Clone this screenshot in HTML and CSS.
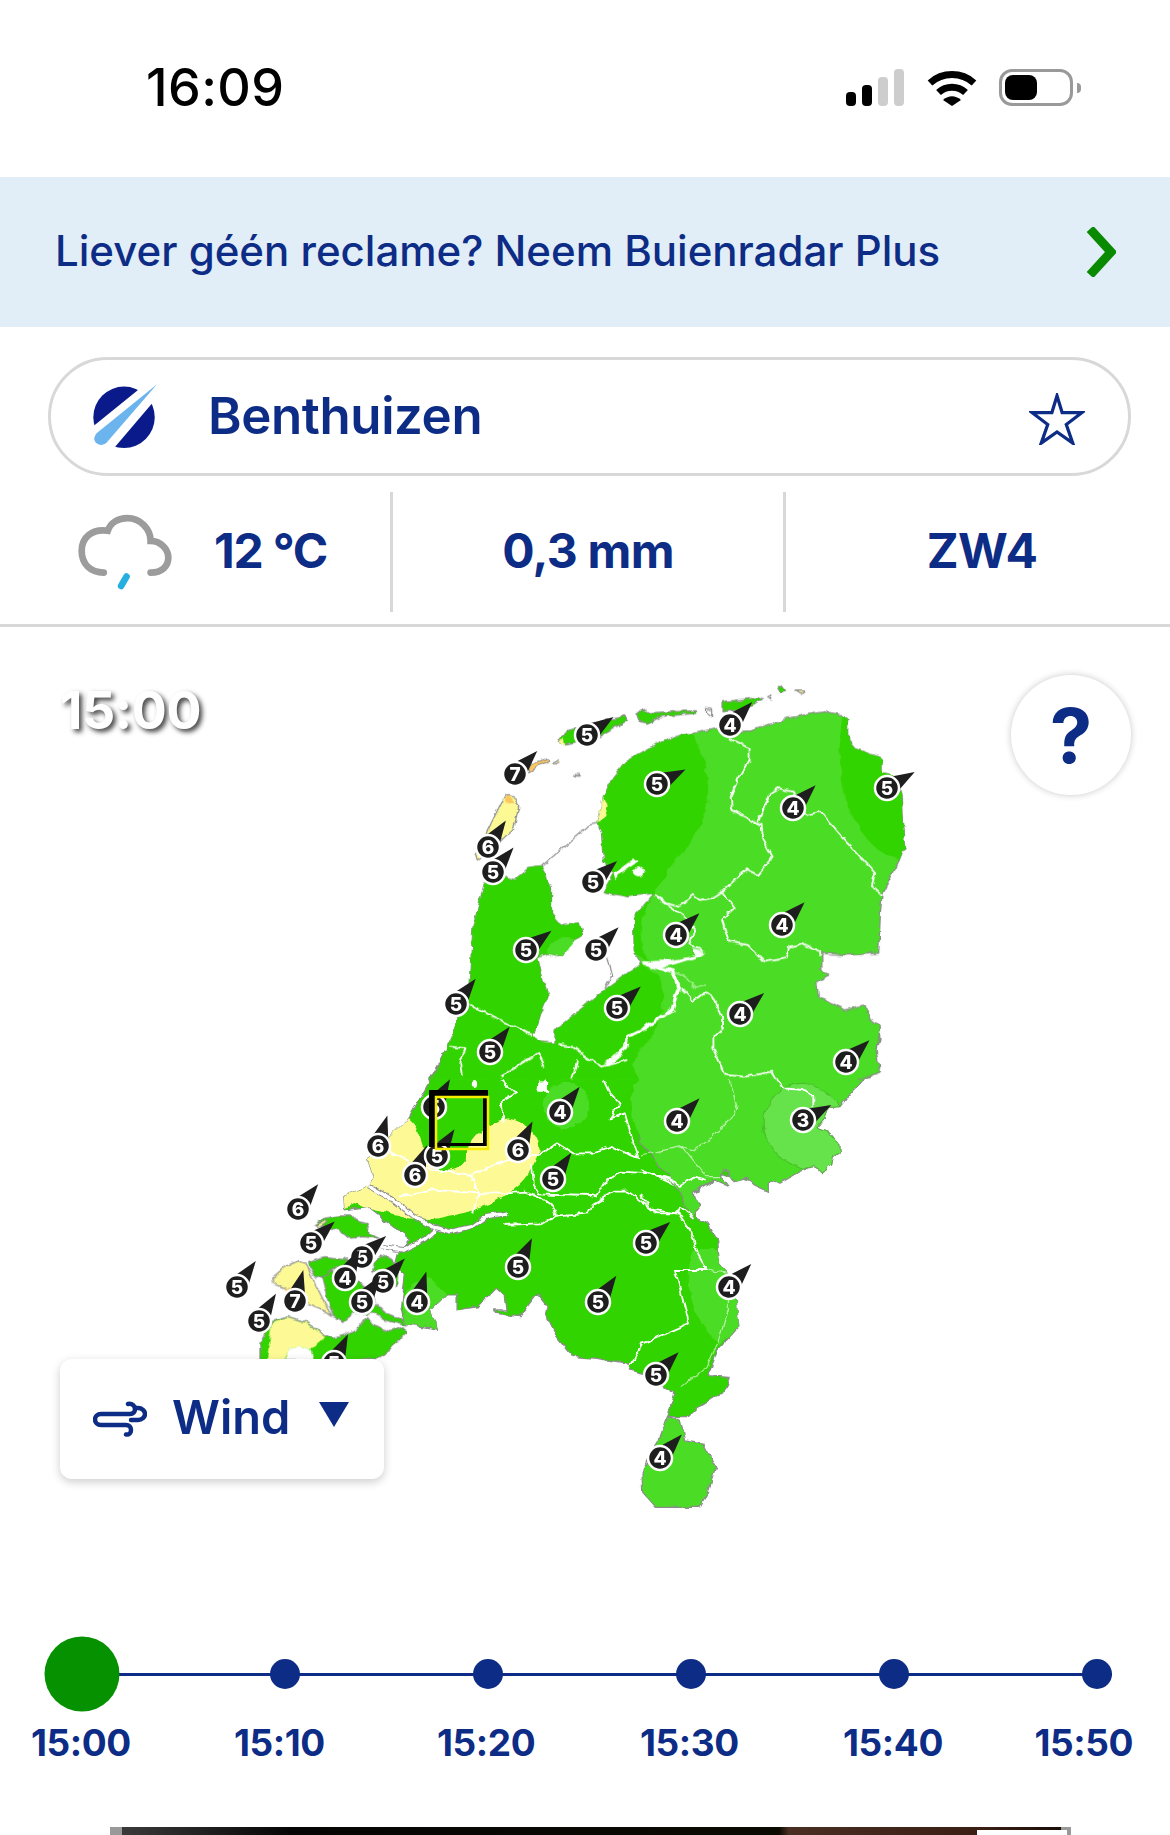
FILE: index.html
```html
<!DOCTYPE html>
<html lang="nl">
  <head>
    <meta charset="utf-8">
    <title>Buienradar</title>
    <link rel="stylesheet" href="styles.css">
  </head>
  <body>
    <div class="status-bar">
      <div class="clock">16:09</div>
      <div class="status-icons">
        <div class="signal">
          <span class="bar bar-1"></span>
          <span class="bar bar-2"></span>
          <span class="bar bar-3"></span>
          <span class="bar bar-4"></span>
        </div>
        <svg class="wifi" viewBox="0 0 50 37">
          <path class="wifi-arc" d="M3 14 A33 33 0 0 1 47 14"/>
          <path class="wifi-arc" d="M11.5 23.5 A20 20 0 0 1 38.500 23.500"/>
          <path class="wifi-dot" d="M16 31 Q25 23.500 34 31 L25 37 Z"/>
        </svg>
        <div class="battery"><span class="battery-level"></span></div>
        <span class="battery-tip"></span>
      </div>
    </div>

    <div class="promo">
      <span class="promo-text">Liever géén reclame? Neem Buienradar Plus</span>
      <svg class="promo-arrow" viewBox="0 0 30 50"><path d="M4 2 L25 25 L4 48"/></svg>
    </div>

    <div class="search">
      <svg class="logo" viewBox="95 40 205 205">
        <circle class="logo-disc" cx="193" cy="145" r="94"/>
        <path class="logo-gap" d="M250 50 L92 178 L95 245 L160 242 L285 95 Z"/>
        <path class="logo-tail" d="M294 44 L138 224 Q120 236 106 222 Q96 208 110 193 Z"/>
      </svg>
      <span class="place">Benthuizen</span>
      <svg class="star" viewBox="0 0 60 56">
        <path d="M30 3 L35.500 21 L57 21 L40 34 L47 54 L30 42 L13 54 L20 34 L3 21 L24.500 21 Z"/>
      </svg>
    </div>

    <div class="stats">
      <div class="stat stat-temp">
        <svg class="cloud" viewBox="50 435 290 230">
          <path class="cloud-line" d="M130 610 C90 610 64 585 64 545 C64 505 95 478 142 485 C150 460 175 447 200 447 C240 447 270 480 270 515 C300 515 323 540 323 565 C323 590 305 610 270 610"/>
          <path class="cloud-drop" d="M198 622 L182 650"/>
        </svg>
        <span>12 °C</span>
      </div>
      <div class="stat">0,3 mm</div>
      <div class="stat stat-wind">ZW4</div>
    </div>

    <div class="map">
      <svg class="map-svg" viewBox="0 627 1170 1000">
        <defs>
          <path id="arrow" d="M0 -32 L9 -6 L-9 -6 Z"/>
          <filter id="rough" filterUnits="userSpaceOnUse" x="150" y="650" width="800" height="900" color-interpolation-filters="sRGB">
            <feTurbulence type="fractalNoise" baseFrequency=".11" numOctaves="2" seed="3"/>
            <feDisplacementMap in="SourceGraphic" scale="6" xChannelSelector="R" yChannelSelector="G"/>
          </filter>
        </defs>

        <g filter="url(#rough)">
        <!-- zuid -->
        <g transform="translate(200 1050) scale(.357 .3333)">
          <path class="land dark" d="M690 0 L640 100 585 205 470 325 485 380 475 408 400 438 402 480 470 470 480 480 540 530 590 570 555 610 545 650 575 670 565 770 575 820 665 838 645 780 690 735 720 735 720 780 780 770 830 715 855 740 860 780 825 780 830 790 895 800 945 730 975 770 970 795 1000 860 1045 920 1110 925 1200 940 1205 960 1240 970 1330 1030 1310 1100 1365 1100 1390 1075 1470 1020 1485 985 1420 980 1440 930 1450 900 1510 830 1505 790 1500 700 1455 640 1450 570 1420 520 1390 505 1385 430 1430 400 1455 370 1500 380 1568 405 1568 0"/>
          <path class="land light" d="M1310 1100 L1290 1160 1260 1210 1238 1270 1240 1330 1275 1372 1400 1372 1420 1330 1445 1250 1410 1180 1360 1170 1345 1110 Z"/>
          <path class="zone light" d="M1380 600 C1355 690 1370 800 1455 885 L1510 830 1505 790 1500 700 1455 640 1450 600 Z"/>
          <path class="zone light" d="M570 750 C580 705 620 680 650 690 L692 733 645 780 665 836 575 820 Z"/>
          <ellipse class="zone light" cx="1025" cy="165" rx="65" ry="70"/>
          <path class="zone yellow" d="M585 205 C620 235 625 300 650 345 C680 370 720 370 745 330 C740 280 790 225 860 205 C920 215 960 270 950 310 C930 370 900 430 770 480 C720 495 660 505 640 510 L580 505 480 478 440 458 402 478 400 438 475 408 485 380 470 325 Z"/>
          <path class="blank" d="M950 70 L975 100 975 125 945 125 Z"/>
          <circle class="blank" cx="770" cy="102" r="9"/>
          <polyline class="water-edge" points="475 410 540 450 600 500 650 530 700 545 760 530 800 500 860 490"/>
          <polyline class="water-edge" points="510 590 570 600 630 570 660 540"/>
          <polyline class="water" points="475 410 540 450 600 500 650 530 700 545 760 530 800 500 860 490"/>
          <polyline class="water" points="510 590 570 600 630 570 660 540"/>
          <polyline class="border" points="530 305 600 345 660 360 760 375 860 330 905 330"/>
          <polyline class="border" points="760 375 780 430 765 490"/>
          <polyline class="border" points="560 440 660 420 780 430 860 430 910 425 950 440 990 470 1000 500 950 520 850 525"/>
          <polyline class="border" points="945 430 1090 435 1110 440 1135 395 1180 365 1260 370 1340 410 1400 385"/>
          <polyline class="border" points="1000 500 1090 490 1100 465 1160 425 1200 425 1280 490 1340 490 1375 545 1395 610 1420 660 1330 660 1370 820 1240 880 1200 960"/>
          <polyline class="border" points="930 345 935 405 950 430"/>
          <polyline class="border" points="905 330 955 310 1000 280 1045 310 1090 310 1150 290 1230 325"/>
          <polyline class="border" points="1120 60 1150 130 1175 160 1150 205 1190 190 1225 320"/>
          <polyline class="border" points="1250 0 1190 20 1120 55 1060 25 1040 85"/>
          <polyline class="border" points="730 0 725 75 790 85 830 70 900 25 950 15 1000 50 1060 25"/>
          <polyline class="border" points="840 85 885 130 845 155 850 215"/>
          <polyline class="border faint" points="1420 660 1480 670 1480 780 1450 880 1420 950 1350 1010"/>
        </g>

        <!-- oost -->
        <g transform="translate(640 1030) scale(.3333)">
          <path class="land light" d="M0 0 L718 0 720 30 700 90 718 125 680 140 640 180 620 205 600 230 565 232 555 265 530 295 570 310 600 345 600 365 580 380 575 405 548 425 520 410 480 425 420 460 405 452 385 460 385 485 340 465 320 445 285 455 265 425 250 420 240 435 265 470 220 450 160 490 180 530 165 550 155 570 C130 480 60 400 0 340 Z"/>
          <path class="zone lighter" d="M490 418 C410 390 365 330 370 270 C375 210 430 160 490 160 C530 165 580 195 600 230 L565 232 555 265 530 295 570 310 600 345 600 365 580 380 575 405 548 425 520 410 Z"/>
          <polyline class="border" points="225 5 220 40 250 110 265 130 355 128 385 120 430 175 490 180 520 200 520 225"/>
          <polyline class="border" points="0 420 40 435 90 450 120 465 165 440 200 450"/>
          <polyline class="border" points="0 495 40 540 110 550 120 530 145 550 160 570"/>
          <polyline class="border faint" points="265 135 270 160 290 240 240 300 210 325 160 360 125 350 50 365 0 375"/>
          <polyline class="border faint" points="125 350 165 400 200 440 240 440"/>
        </g>
        <path class="zone light" transform="translate(200 1050) scale(.357 .3333)" d="M1250 0 L1210 40 1230 90 1205 140 1210 210 1240 270 1275 320 1290 0 Z"/>

        <!-- zeeland -->
        <g transform="translate(210 1210) scale(.3333)">
          <path class="land dark" d="M312 45 L340 25 385 18 420 18 470 40 480 70 505 85 460 80 420 85 385 60 365 55 Z"/>
          <path class="land yellow" d="M320 45 L345 30 350 38 325 55 Z"/>
          <path class="land dark" d="M490 160 L510 135 550 150 565 175 560 230 520 195 485 185 Z"/>
          <path class="land dark" d="M295 155 L340 140 400 145 420 160 375 175 355 190 320 205 305 180 Z"/>
          <path class="land dark" d="M335 200 L365 185 440 210 480 240 500 280 530 310 580 330 590 345 520 325 490 310 430 310 400 335 370 320 350 260 Z"/>
          <path class="land yellow" d="M185 205 L225 170 265 152 290 165 320 230 350 290 365 320 330 295 290 280 260 255 225 235 190 220 Z"/>
          <path class="zone orange" d="M220 240 L240 228 248 236 230 245 Z"/>
          <path class="land dark" d="M150 400 L185 335 235 320 285 335 345 375 370 385 405 375 450 350 470 320 490 345 540 365 580 350 585 370 540 420 500 450 150 450 Z"/>
          <path class="zone yellow" d="M172 440 L185 340 235 322 285 338 345 378 300 420 265 408 232 420 230 450 172 450 Z"/>
          <path class="blank" d="M232 420 L265 408 300 420 312 450 232 450 Z"/>
        </g>

        <!-- noord -->
        <g transform="translate(400 660) scale(.3444 .3333)">
          <path class="land light" d="M95 1260 L150 1130 200 980 212 800 245 670 300 650 335 660 375 625 410 620 440 680 440 760 470 795 520 785 530 825 500 845 470 890 430 880 400 890 415 960 430 1010 410 1060 395 1110 380 1120 400 1145 450 1150 450 1110 600 985 700 910 680 880 678 770 735 700 660 710 590 695 620 640 590 600 585 520 575 490 590 410 610 365 660 300 720 265 815 222 850 220 920 205 960 215 1020 212 1040 205 1120 175 1230 155 1285 165 1300 180 1300 240 1320 265 1400 295 1400 340 1440 350 1455 400 1460 500 1465 560 1450 600 1400 700 1395 760 1390 880 1300 885 1225 880 1225 930 1245 945 1210 965 1215 1010 1290 1050 1350 1035 1365 1075 1395 1100 1385 1170 1395 1235 1340 1255 1330 1260"/>
          <path class="zone dark" d="M575 490 L590 410 610 365 660 300 720 265 815 222 850 220 C905 330 930 470 800 600 C770 640 750 690 735 700 L660 710 590 695 620 640 590 600 585 520 Z"/>
          <path class="zone dark" d="M1285 165 L1300 180 1300 240 1320 265 1400 295 1400 340 1440 350 1455 400 1460 500 1465 560 1450 600 C1330 560 1250 400 1285 165 Z"/>
          <path class="zone dark" d="M95 1260 L150 1130 200 980 212 800 245 670 300 650 335 660 375 625 410 620 440 680 440 760 470 795 520 785 530 825 500 845 470 890 430 880 400 890 415 960 430 1010 410 1060 395 1110 380 1120 400 1145 450 1150 450 1110 600 985 700 910 750 950 C790 1050 740 1120 690 1180 C670 1210 680 1240 695 1260 Z"/>
          <path class="zone dark" d="M735 700 L678 770 680 880 720 905 C690 840 690 790 735 700 Z"/>
          <path class="zone light" d="M425 875 C440 835 490 815 503 850 L470 890 430 880 Z"/>
          <path class="zone yellow" d="M590 410 L600 440 590 480 575 490 585 430 Z"/>
          <path class="blank" d="M620 640 L680 595 690 605 640 640 625 660 Z"/>
          <ellipse class="blank" cx="693" cy="637" rx="17" ry="15"/>
          <path class="blank" d="M700 905 L790 900 860 885 850 865 885 880 870 890 790 915 730 925 Z"/>

          <path class="land yellow" d="M315 403 L300 415 255 510 250 530 220 590 225 600 290 545 330 505 345 440 330 410 Z"/>
          <path class="zone orange" d="M303 425 L315 405 333 430 Z"/>
          <path class="land orange" d="M370 325 L385 310 430 293 437 300 400 320 375 340 Z"/>
          <path class="land yellow" d="M445 310 L460 300 465 308 450 315 Z"/>
          <path class="land dark" d="M462 245 L482 212 540 200 600 180 655 170 660 180 620 205 560 240 480 255 Z"/>
          <path class="zone yellow" d="M462 245 L475 235 480 258 Z"/>
          <path class="land dark" d="M688 165 L710 148 725 158 860 152 862 160 750 170 720 190 695 185 Z"/>
          <path class="land dark" d="M935 125 L1050 112 1052 118 990 150 935 155 Z"/>
          <path class="land dark" d="M1095 80 L1110 75 1122 92 1105 100 Z"/>
          <path class="land yellow" d="M1150 90 L1175 90 1165 100 Z"/>
          <path class="land blank" d="M1068 110 L1080 105 1075 120 Z"/>
          <path class="land blank" d="M890 145 L905 150 905 170 890 160 Z"/>
          <path class="land blank" d="M505 340 L520 340 520 345 505 345 Z"/>

          <polyline class="dike" points="410 620 550 495 575 490"/>
          <polyline class="dike" points="600 890 615 950 595 985"/>
          <polyline class="border wide" points="705 908 760 925 795 935 808 985 790 1050 740 1085 700 1110 660 1130 655 1165 600 1215"/>
          <polyline class="border" points="955 235 1015 265 1015 300 985 350 960 410 965 450 1030 485 1050 495 1055 540 1082 590 1040 645 1005 628 935 695 905 715 870 720 850 705 815 738 780 730 740 705"/>
          <polyline class="border" points="1040 485 1070 405 1100 385 1140 395 1180 465 1220 455 1380 640 1370 675 1400 705"/>
          <polyline class="border" points="935 695 972 745 935 780 955 845 1010 855 1060 905 1120 895 1130 860 1170 850 1220 875 1220 885"/>
          <polyline class="border" points="740 705 780 740 830 775 855 810 840 850 880 875"/>
          <polyline class="border" points="815 985 850 1025 880 1000 905 1005 935 1070 935 1105 910 1130 910 1165 945 1245 1000 1250 1080 1235 1095 1260"/>
          <polyline class="border faint" points="790 930 830 950 860 985 885 975"/>
          <polyline class="border" points="145 1160 190 1165 175 1210 180 1250"/>
          <polyline class="border" points="205 1035 270 1070 345 1105 380 1125"/>
          <polyline class="border" points="290 1250 400 1180 420 1220"/>
          <polyline class="border" points="515 1200 500 1260"/>
          <polyline class="border" points="460 1155 500 1160 540 1190 585 1220 660 1200"/>
        </g>
        </g>

        <g class="wind-mark" transform="translate(730 725)"><use href="#arrow" transform="rotate(44)"/><circle r="12"/><text y="7">4</text></g>
        <g class="wind-mark" transform="translate(587 735)"><use href="#arrow" transform="rotate(56)"/><circle r="12"/><text y="7">5</text></g>
        <g class="wind-mark" transform="translate(515 774)"><use href="#arrow" transform="rotate(44)"/><circle r="12"/><text y="7">7</text></g>
        <g class="wind-mark" transform="translate(657 784)"><use href="#arrow" transform="rotate(63)"/><circle r="12"/><text y="7">5</text></g>
        <g class="wind-mark" transform="translate(887 788)"><use href="#arrow" transform="rotate(60)"/><circle r="12"/><text y="7">5</text></g>
        <g class="wind-mark" transform="translate(793 808)"><use href="#arrow" transform="rotate(45)"/><circle r="12"/><text y="7">4</text></g>
        <g class="wind-mark" transform="translate(488 847)"><use href="#arrow" transform="rotate(34)"/><circle r="12"/><text y="7">6</text></g>
        <g class="wind-mark" transform="translate(493 872)"><use href="#arrow" transform="rotate(40)"/><circle r="12"/><text y="7">5</text></g>
        <g class="wind-mark" transform="translate(593 882)"><use href="#arrow" transform="rotate(49)"/><circle r="12"/><text y="7">5</text></g>
        <g class="wind-mark" transform="translate(782 925)"><use href="#arrow" transform="rotate(45)"/><circle r="12"/><text y="7">4</text></g>
        <g class="wind-mark" transform="translate(676 935)"><use href="#arrow" transform="rotate(47)"/><circle r="12"/><text y="7">4</text></g>
        <g class="wind-mark" transform="translate(526 950)"><use href="#arrow" transform="rotate(53)"/><circle r="12"/><text y="7">5</text></g>
        <g class="wind-mark" transform="translate(596 950)"><use href="#arrow" transform="rotate(45)"/><circle r="12"/><text y="7">5</text></g>
        <g class="wind-mark" transform="translate(456 1004)"><use href="#arrow" transform="rotate(38)"/><circle r="12"/><text y="7">5</text></g>
        <g class="wind-mark" transform="translate(617 1008)"><use href="#arrow" transform="rotate(48)"/><circle r="12"/><text y="7">5</text></g>
        <g class="wind-mark" transform="translate(740 1014)"><use href="#arrow" transform="rotate(49)"/><circle r="12"/><text y="7">4</text></g>
        <g class="wind-mark" transform="translate(490 1052)"><use href="#arrow" transform="rotate(38)"/><circle r="12"/><text y="7">5</text></g>
        <g class="wind-mark" transform="translate(846 1062)"><use href="#arrow" transform="rotate(47)"/><circle r="12"/><text y="7">4</text></g>
        <g class="wind-mark" transform="translate(434 1107)"><use href="#arrow" transform="rotate(30)"/><circle r="12"/><text y="7">5</text></g>
        <g class="wind-mark" transform="translate(560 1112)"><use href="#arrow" transform="rotate(38)"/><circle r="12"/><text y="7">4</text></g>
        <g class="wind-mark" transform="translate(677 1121)"><use href="#arrow" transform="rotate(45)"/><circle r="12"/><text y="7">4</text></g>
        <g class="wind-mark" transform="translate(803 1120)"><use href="#arrow" transform="rotate(62)"/><circle r="12"/><text y="7">3</text></g>
        <g class="wind-mark" transform="translate(378 1146)"><use href="#arrow" transform="rotate(17)"/><circle r="12"/><text y="7">6</text></g>
        <g class="wind-mark" transform="translate(518 1150)"><use href="#arrow" transform="rotate(27)"/><circle r="12"/><text y="7">6</text></g>
        <g class="wind-mark" transform="translate(415 1175)"><use href="#arrow" transform="rotate(22)"/><circle r="12"/><text y="7">6</text></g>
        <g class="wind-mark" transform="translate(437 1156)"><use href="#arrow" transform="rotate(33)"/><circle r="12"/><text y="7">5</text></g>
        <g class="wind-mark" transform="translate(553 1179)"><use href="#arrow" transform="rotate(35)"/><circle r="12"/><text y="7">5</text></g>
        <g class="wind-mark" transform="translate(298 1209)"><use href="#arrow" transform="rotate(39)"/><circle r="12"/><text y="7">6</text></g>
        <g class="wind-mark" transform="translate(311 1243)"><use href="#arrow" transform="rotate(48)"/><circle r="12"/><text y="7">5</text></g>
        <g class="wind-mark" transform="translate(646 1243)"><use href="#arrow" transform="rotate(49)"/><circle r="12"/><text y="7">5</text></g>
        <g class="wind-mark" transform="translate(362 1257)"><use href="#arrow" transform="rotate(49)"/><circle r="12"/><text y="7">5</text></g>
        <g class="wind-mark" transform="translate(518 1267)"><use href="#arrow" transform="rotate(26)"/><circle r="12"/><text y="7">5</text></g>
        <g class="wind-mark" transform="translate(345 1278)"><use href="#arrow" transform="rotate(27)"/><circle r="12"/><text y="7">4</text></g>
        <g class="wind-mark" transform="translate(383 1282)"><use href="#arrow" transform="rotate(43)"/><circle r="12"/><text y="7">5</text></g>
        <g class="wind-mark" transform="translate(729 1287)"><use href="#arrow" transform="rotate(44)"/><circle r="12"/><text y="7">4</text></g>
        <g class="wind-mark" transform="translate(237 1287)"><use href="#arrow" transform="rotate(36)"/><circle r="12"/><text y="7">5</text></g>
        <g class="wind-mark" transform="translate(362 1302)"><use href="#arrow" transform="rotate(35)"/><circle r="12"/><text y="7">5</text></g>
        <g class="wind-mark" transform="translate(295 1301)"><use href="#arrow" transform="rotate(15)"/><circle r="12"/><text y="7">7</text></g>
        <g class="wind-mark" transform="translate(598 1302)"><use href="#arrow" transform="rotate(35)"/><circle r="12"/><text y="7">5</text></g>
        <g class="wind-mark" transform="translate(417 1302)"><use href="#arrow" transform="rotate(17)"/><circle r="12"/><text y="7">4</text></g>
        <g class="wind-mark" transform="translate(259 1321)"><use href="#arrow" transform="rotate(32)"/><circle r="12"/><text y="7">5</text></g>
        <g class="wind-mark" transform="translate(334 1363)"><use href="#arrow" transform="rotate(26)"/><circle r="12"/><text y="7">5</text></g>
        <g class="wind-mark" transform="translate(656 1375)"><use href="#arrow" transform="rotate(45)"/><circle r="12"/><text y="7">5</text></g>
        <g class="wind-mark" transform="translate(660 1458)"><use href="#arrow" transform="rotate(43)"/><circle r="12"/><text y="7">4</text></g>

        <!-- locatie -->
        <path class="spot-black" d="M429 1090 H488 V1096 H487 V1146 H436 V1147 H429 Z M436 1096 V1143 H483 V1096 Z"/>
        <rect class="spot-yellow" x="436" y="1097" width="52" height="52"/>
      </svg>

      <div class="map-time">15:00</div>
      <div class="help">?</div>
      <div class="layer-select">
        <svg class="wind-icon" viewBox="0 0 54 36">
          <path d="M35 3 C39 2 42 5 42 8 C42 11 40 13 37 13 H8 C4.500 13 2 15.500 2 18.500 S4.500 24 8 24 H33 C36 24 38 26 38 29 S36 34 33 33.500"/>
          <path d="M42 7 H45 C49 7 52 10 52 13 S49 19 45 19 H38"/>
        </svg>
        <span class="layer-name">Wind</span>
        <span class="layer-caret"></span>
      </div>
    </div>

    <div class="timeline">
      <div class="track">
        <span class="dot active"></span>
        <span class="dot"></span>
        <span class="dot"></span>
        <span class="dot"></span>
        <span class="dot"></span>
        <span class="dot"></span>
      </div>
      <div class="times">
        <span>15:00</span>
        <span>15:10</span>
        <span>15:20</span>
        <span>15:30</span>
        <span>15:40</span>
        <span>15:50</span>
      </div>
    </div>

    <div class="ad">
      <div class="ad-image"><span class="ad-close"></span></div>
    </div>
  </body>
</html>
```

FILE: styles.css
```css
html, body {
  margin: 0;
  padding: 0;
  height: 1835px;
  overflow: hidden;
  background: #fff;
}

body {
  font-family: Inter, "Liberation Sans", sans-serif;
  color: #0d2c86;
}

/* status bar */
.status-bar {
  height: 177px;
  position: relative;
  display: flex;
  justify-content: space-between;
  align-items: flex-start;
}

.clock {
  margin: 58px 0 0 146px;
  font-size: 52px;
  line-height: 60px;
  font-weight: 500;
  color: #000;
  letter-spacing: .4px;
}

.status-icons {
  display: flex;
  align-items: center;
  margin: 69px 89px 0 0;
  height: 37px;
}

.signal {
  display: flex;
  align-items: flex-end;
  gap: 6px;
  height: 37px;
}

.bar {
  width: 10px;
  border-radius: 4px;
  background: #000;
}

.bar-1 { height: 14px; }
.bar-2 { height: 21px; }
.bar-3 { height: 29px; background: #cdcdcd; }
.bar-4 { height: 37px; background: #cdcdcd; }

.wifi {
  width: 50px;
  height: 37px;
  margin-left: 23px;
}

.wifi-arc {
  fill: none;
  stroke: #000;
  stroke-width: 7;
}

.wifi-dot {
  fill: #000;
}

.battery {
  width: 74px;
  height: 37px;
  box-sizing: border-box;
  margin-left: 22px;
  border: 3px solid #999;
  border-radius: 13px;
  padding: 3px;
}

.battery-level {
  display: block;
  width: 32px;
  height: 25px;
  border-radius: 8px;
  background: #000;
}

.battery-tip {
  width: 4px;
  height: 10px;
  margin-left: 4px;
  background: #999;
  border-radius: 0 5px 5px 0;
}

/* promo */
.promo {
  height: 150px;
  box-sizing: border-box;
  background: #e1edf7;
  display: flex;
  align-items: center;
  justify-content: space-between;
  padding: 0 54px 0 55px;
}

.promo-text {
  font-size: 42px;
  font-weight: 500;
  position: relative;
  top: -2px;
}

.promo-arrow {
  width: 30px;
  height: 50px;
}

.promo-arrow path {
  fill: none;
  stroke: #0a8a00;
  stroke-width: 9;
}

/* search */
.search {
  height: 119px;
  box-sizing: border-box;
  margin: 30px 39px 0 48px;
  border: 3px solid #d8d8d8;
  border-radius: 60px;
  display: flex;
  align-items: center;
  padding: 0 43px 0 41px;
}

.logo {
  width: 67px;
  height: 67px;
}

.logo-disc { fill: #0a1a8a; }
.logo-gap { fill: #fff; }
.logo-tail { fill: #6cb4ee; }

.place {
  margin-left: 49px;
  font-size: 51px;
  font-weight: 600;
  letter-spacing: -.4px;
  position: relative;
  top: -1px;
}

.star {
  width: 56px;
  height: 52px;
  margin-left: auto;
  position: relative;
  top: 2px;
}

.star path {
  fill: #fff;
  stroke: #0d2c86;
  stroke-width: 3.500;
}

/* stats */
.stats {
  margin-top: 16px;
  padding-bottom: 12px;
  border-bottom: 3px solid #d8d8d8;
  display: grid;
  grid-template-columns: 390px 393px 1fr;
}

.stat {
  height: 120px;
  box-sizing: border-box;
  padding-bottom: 4px;
  display: flex;
  align-items: center;
  justify-content: center;
  font-size: 48px;
  font-weight: 700;
  letter-spacing: -.7px;
  border-left: 3px solid #d8d8d8;
}

.stat-temp {
  border-left: 0;
  justify-content: flex-start;
  padding: 0 0 0 77px;
  letter-spacing: -1.2px;
}

.stat-temp span {
  margin: 0 0 4px 40px;
}

.stat-wind {
  padding-left: 8px;
}

.cloud {
  width: 97px;
  height: 77px;
}

.cloud-line {
  fill: none;
  stroke: #9c9c9c;
  stroke-width: 20;
  stroke-linecap: round;
}

.cloud-drop {
  fill: none;
  stroke: #25aee0;
  stroke-width: 20;
  stroke-linecap: round;
}

/* map */
.map {
  position: relative;
  height: 1000px;
}

.map-svg {
  display: block;
  width: 1170px;
  height: 1000px;
}

.map-svg * {
  vector-effect: non-scaling-stroke;
}

.land {
  stroke: #8c8c8c;
  stroke-width: 1.2;
  stroke-linejoin: round;
}

.zone {
  stroke: none;
}

.dark { fill: #32d400; }
.light { fill: #4bdc25; }
.lighter { fill: #66e24a; stroke: #3aa51c; stroke-width: .6; }
.yellow { fill: #fdfa96; }
.orange { fill: #fbc860; }
.blank { fill: #fff; }

.border {
  fill: none;
  stroke: #fff;
  stroke-width: 1.8;
  stroke-linejoin: round;
}

.wide {
  stroke-width: 3.500;
}

.faint {
  stroke-width: 1.2;
  stroke-opacity: .6;
}

.water-edge {
  fill: none;
  stroke: #8c8c8c;
  stroke-width: 5.500;
  stroke-linejoin: round;
}

.water {
  fill: none;
  stroke: #fff;
  stroke-width: 3.500;
  stroke-linejoin: round;
}

.dike {
  fill: none;
  stroke: #8c8c8c;
  stroke-width: 1.2;
}

.wind-mark use {
  fill: #1e1e1e;
}

.wind-mark circle {
  fill: #1e1e1e;
  stroke: #fff;
  stroke-width: 2.500;
}

.wind-mark text {
  fill: #fff;
  font-family: Inter, "Liberation Sans", sans-serif;
  font-size: 19px;
  font-weight: 800;
  text-anchor: middle;
}

.spot-black {
  fill: #000;
  fill-rule: evenodd;
}

.spot-yellow {
  fill: none;
  stroke: #f5ee00;
  stroke-width: 2.500;
}

.map-time {
  position: absolute;
  left: 60px;
  top: 54px;
  font-size: 52px;
  line-height: 60px;
  font-weight: 700;
  color: #fff;
  letter-spacing: -.4px;
  text-shadow: 3px 3px 5px #444;
}

.help {
  position: absolute;
  left: 1011px;
  top: 48px;
  width: 120px;
  height: 120px;
  border-radius: 50%;
  background: #fff;
  box-shadow: 0 0 7px rgba(0, 0, 0, .22);
  display: flex;
  align-items: center;
  justify-content: center;
  font-size: 76px;
  font-weight: 700;
}

.layer-select {
  position: absolute;
  left: 60px;
  top: 732px;
  width: 324px;
  height: 120px;
  border-radius: 12px;
  background: #fff;
  box-shadow: 0 3px 10px rgba(0, 0, 0, .2);
  display: flex;
  align-items: center;
}

.wind-icon {
  width: 54px;
  height: 36px;
  margin: 0 0 0 33px;
}

.wind-icon path {
  fill: none;
  stroke: #0d2c86;
  stroke-width: 4.500;
  stroke-linecap: round;
}

.layer-name {
  margin-left: 25px;
  font-size: 47px;
  font-weight: 600;
  position: relative;
  top: -3px;
}

.layer-caret {
  margin-left: 29px;
  width: 0;
  height: 0;
  border-left: 15px solid transparent;
  border-right: 15px solid transparent;
  border-top: 25px solid #0d2c86;
  position: relative;
  top: -5px;
}

/* timeline */
.timeline {
  padding-top: 32px;
}

.track {
  height: 30px;
  margin: 0 58px 0 67px;
  display: flex;
  justify-content: space-between;
  background: linear-gradient(#0d2c86, #0d2c86) center / 100% 3px no-repeat;
}

.dot {
  width: 30px;
  height: 30px;
  border-radius: 50%;
  background: #0d2c86;
}

.dot.active {
  background: #059100;
  transform: scale(2.5);
}

.times {
  display: grid;
  grid-template-columns: repeat(4, 203px) 1fr auto;
  margin-top: 32px;
  padding: 0 37px 0 31px;
  font-size: 37px;
  line-height: 44px;
  font-weight: 700;
  letter-spacing: -.4px;
}

/* ad */
.ad {
  margin: 62px 99px 0 110px;
  height: 60px;
  background: #999;
  padding: 0 10px 0 12px;
}

.ad-image {
  height: 100%;
  position: relative;
  background: linear-gradient(90deg, #3a3a3a, #050505 18%, #0b0a02 70%, #4a2e22 71%, #3a1e14 92%, #1a0d08);
}

.ad-close {
  position: absolute;
  right: -6px;
  top: 3px;
  width: 90px;
  height: 40px;
  background: #fff;
}
```
